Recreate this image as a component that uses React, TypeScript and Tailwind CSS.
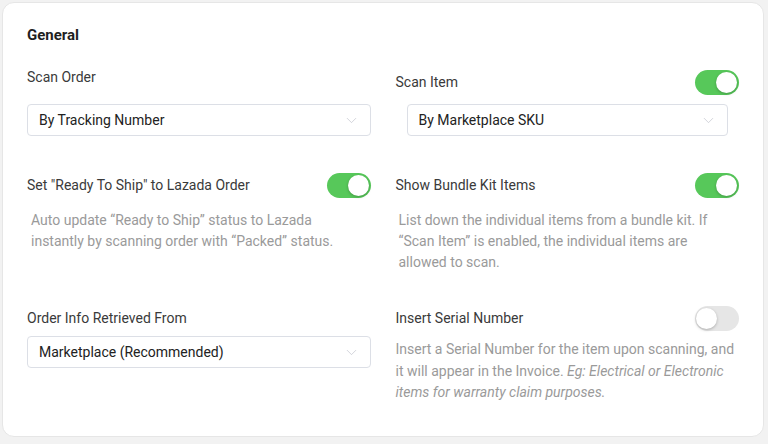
import { ChevronDown } from 'lucide-react';

function Toggle({ on }: { on: boolean }) {
  return (
    <button
      type="button"
      className={`relative h-[25px] w-[44px] shrink-0 rounded-full ${on ? 'bg-[#57c85a]' : 'bg-[#e6e6e6]'}`}
    >
      <span
        className={`absolute top-[2px] h-[21px] w-[21px] rounded-full bg-white shadow-[0_1px_3px_rgba(0,0,0,0.25)] ${on ? 'right-[2px]' : 'left-[1px]'}`}
      />
    </button>
  );
}

function Select({ value, className = '' }: { value: string; className?: string }) {
  return (
    <div
      className={`flex h-[32px] items-center justify-between rounded-[4px] border border-[#dcdfe6] bg-white pl-[11px] pr-[10px] ${className}`}
    >
      <span className="text-[14px] text-[#222]">{value}</span>
      <ChevronDown size={17} strokeWidth={1} className="text-[#c0c4cc]" />
    </div>
  );
}

export default function App() {
  return (
    <div className="min-h-[444px] bg-[#f2f2f2] p-[2px] pr-[4px] font-['Roboto',sans-serif]">
      <div className="h-[435px] rounded-[12px] border border-[#e6e6e6] bg-white px-[24px] pt-[22px]">
        <h2 className="text-[15px] font-bold leading-[20px] text-[#1f1f1f]">General</h2>

        <div className="mt-[22px] grid grid-cols-2 gap-x-[25px]">
          {/* Row 1 */}
          <div>
            <p className="text-[14px] leading-[20px] text-[#3a3a3a]">Scan Order</p>
            <Select value="By Tracking Number" className="mt-[17px]" />
          </div>
          <div className="pt-[3px]">
            <div className="flex h-[25px] items-center justify-between">
              <p className="text-[14px] text-[#3a3a3a]">Scan Item</p>
              <Toggle on />
            </div>
            <Select value="By Marketplace SKU" className="ml-[11px] mr-[11px] mt-[9px]" />
          </div>

          {/* Row 2 */}
          <div className="pt-[37px]">
            <div className="flex h-[25px] items-center justify-between">
              <p className="text-[14px] text-[#3a3a3a]">Set "Ready To Ship" to Lazada Order</p>
              <Toggle on />
            </div>
            <p className="mt-[12px] pl-[4px] pr-[20px] text-[14px] leading-[21px] text-[#9a9a9a]">
              Auto update “Ready to Ship” status to Lazada instantly by scanning order with “Packed” status.
            </p>
          </div>
          <div className="pt-[37px]">
            <div className="flex h-[25px] items-center justify-between">
              <p className="text-[14px] text-[#3a3a3a]">Show Bundle Kit Items</p>
              <Toggle on />
            </div>
            <p className="mt-[12px] pl-[3px] text-[14px] leading-[21px] text-[#9a9a9a]">
              List down the individual items from a bundle kit. If “Scan Item” is enabled, the individual items are
              allowed to scan.
            </p>
          </div>

          {/* Row 3 */}
          <div className="pt-[33px]">
            <div className="flex h-[25px] items-center">
              <p className="text-[14px] text-[#3a3a3a]">Order Info Retrieved From</p>
            </div>
            <Select value="Marketplace (Recommended)" className="mt-[5px]" />
          </div>
          <div className="pt-[33px]">
            <div className="flex h-[25px] items-center justify-between">
              <p className="text-[14px] text-[#3a3a3a]">Insert Serial Number</p>
              <Toggle on={false} />
            </div>
            <p className="mt-[8px] text-[14px] leading-[21.5px] text-[#9a9a9a]">
              Insert a Serial Number for the item upon scanning, and it will appear in the Invoice.{' '}
              <i>Eg: Electrical or Electronic items for warranty claim purposes.</i>
            </p>
          </div>
        </div>
      </div>
    </div>
  );
}
